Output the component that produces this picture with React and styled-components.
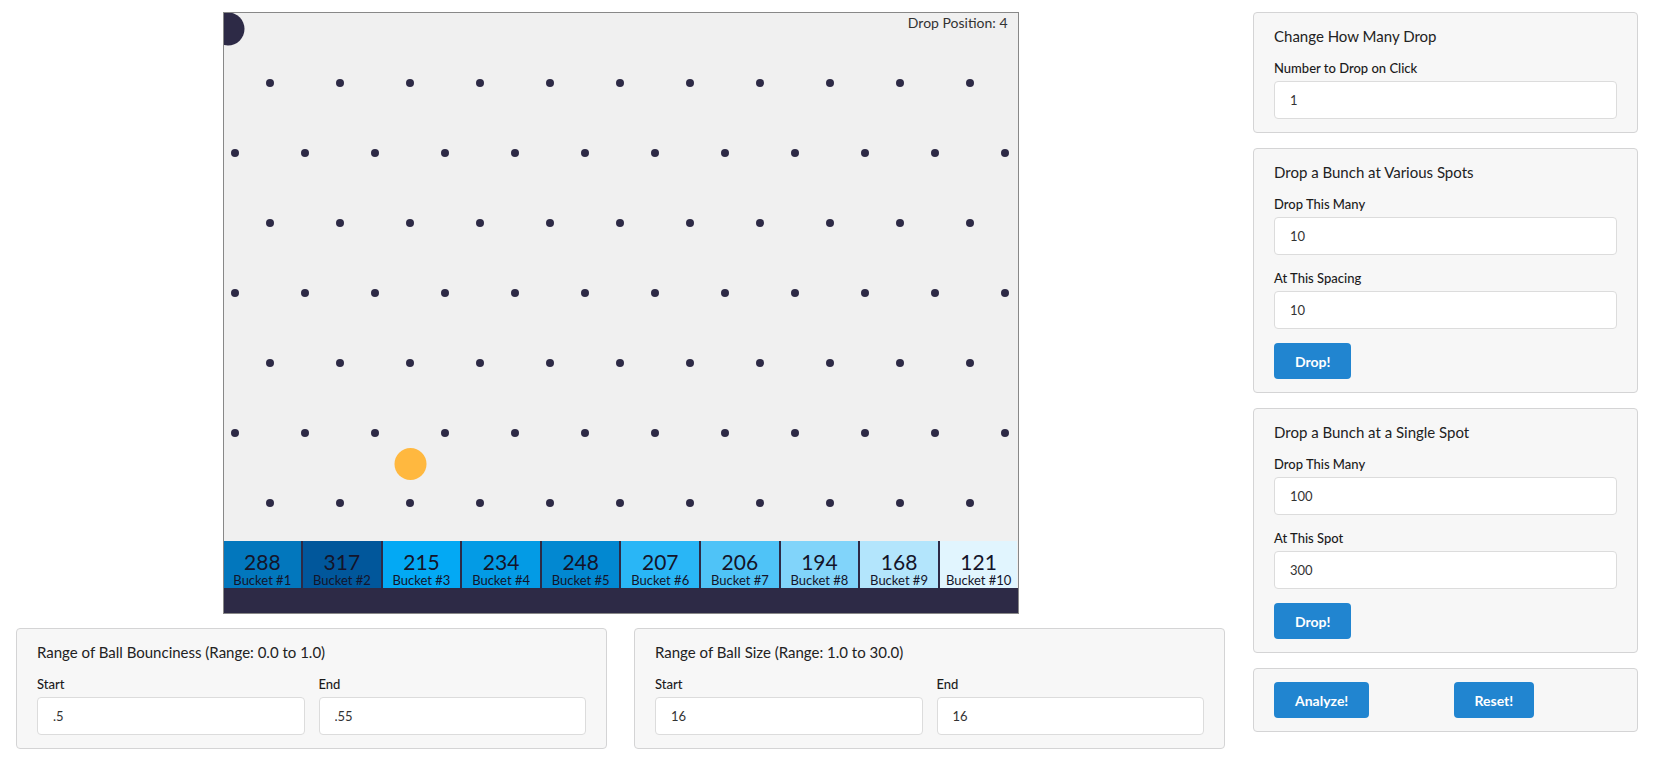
import React from "react";
import styled, { createGlobalStyle } from "styled-components";

const GlobalStyle = createGlobalStyle`
  body {
    margin: 0;
    background: #fff;
    font-family: Lato, "Open Sans", "Liberation Sans", sans-serif;
    color: #222;
  }
`;

const INK = "#2d2a46";

const Page = styled.div`
  display: flex;
  align-items: flex-start;
  gap: 28px;
  padding: 12px 0 0 16px;
`;

const LeftCol = styled.div`
  width: 1209px;
  display: flex;
  flex-direction: column;
  align-items: center;
  gap: 14px;
`;

const RightCol = styled.div`
  width: 385px;
  display: flex;
  flex-direction: column;
  gap: 15px;
`;

const Board = styled.div`
  position: relative;
  width: 794px;
  border: 1px solid #888;
  background: #f0f0f0;
  overflow: hidden;
  display: flex;
  flex-direction: column;
`;

const DropPosition = styled.div`
  position: absolute;
  top: 1px;
  right: 10px;
  font-size: 14px;
  line-height: 17px;
  color: #333;
`;

const PegField = styled.svg`
  display: block;
  width: 794px;
  height: 528px;
`;

const BucketRow = styled.div`
  display: flex;
  height: 47px;
`;

const Bucket = styled.div`
  flex: 1;
  display: flex;
  flex-direction: column;
  align-items: center;
  justify-content: flex-end;
  background: ${(p) => p.$bg};
  border-left: ${(p) => (p.$first ? "none" : `2px solid ${INK}`)};
  color: #14142a;
`;

const Count = styled.div`
  font-size: 21px;
  line-height: 22px;
`;

const BucketName = styled.div`
  font-size: 13px;
  line-height: 15px;
  white-space: nowrap;
`;

const Floor = styled.div`
  height: 25px;
  background: ${INK};
`;

const BottomRow = styled.div`
  align-self: stretch;
  display: grid;
  grid-template-columns: 1fr 1fr;
  gap: 27px;
`;

const Panel = styled.div`
  background: #f7f7f7;
  border: 1px solid #d4d4d5;
  border-radius: 4px;
  padding: 13px 20px;
`;

const PanelTitle = styled.div`
  font-size: 15px;
  line-height: 20px;
  color: #222;
  margin-bottom: 12px;
`;

const Field = styled.div`
  display: flex;
  flex-direction: column;
  margin-top: ${(p) => (p.$stacked ? "13px" : "0")};
`;

const FieldPair = styled.div`
  display: grid;
  grid-template-columns: 1fr 1fr;
  gap: 14px;
`;

const Label = styled.label`
  font-size: 13px;
  line-height: 20px;
  font-weight: 500;
  color: #1b1b1b;
  margin-bottom: 3px;
`;

const Input = styled.input`
  box-sizing: border-box;
  width: 100%;
  height: 38px;
  border: 1px solid #dcdcdc;
  border-radius: 4px;
  background: #fff;
  padding: 0 15px;
  font-family: Lato, "Liberation Sans", sans-serif;
  font-size: 13px;
  color: #333;
  outline: none;
`;

const Button = styled.button`
  align-self: flex-start;
  height: 36px;
  margin-top: ${(p) => (p.$flush ? "0" : "14px")};
  padding: 0 21px;
  border: none;
  border-radius: 4px;
  background: #2185d0;
  color: #fff;
  font-family: Lato, "Liberation Sans", sans-serif;
  font-size: 14px;
  font-weight: 700;
  cursor: pointer;
`;

const ButtonGrid = styled.div`
  display: grid;
  grid-template-columns: 1fr 1fr;
  gap: 16px;
  justify-items: start;
`;

const buckets = [
  { count: 288, bg: "#0277bd" },
  { count: 317, bg: "#01579b" },
  { count: 215, bg: "#03a9f4" },
  { count: 234, bg: "#039be5" },
  { count: 248, bg: "#0288d1" },
  { count: 207, bg: "#29b6f6" },
  { count: 206, bg: "#4fc3f7" },
  { count: 194, bg: "#81d4fa" },
  { count: 168, bg: "#b3e5fc" },
  { count: 121, bg: "#e1f5fe" },
];

// peg rows alternate between 11 and 12 pegs, 70px apart
const pegs = [];
for (let row = 1; row <= 7; row++) {
  const wide = row % 2 === 0;
  const start = wide ? 11 : 46;
  const n = wide ? 12 : 11;
  for (let i = 0; i < n; i++) pegs.push([start + i * 70, row * 70]);
}

const Pegs = () => (
  <PegField viewBox="0 0 794 528">
    <circle cx="4" cy="16" r="16.5" fill={INK} />
    {pegs.map(([x, y]) => (
      <circle key={`${x}-${y}`} cx={x} cy={y} r="4" fill={INK} />
    ))}
    <circle cx="186.5" cy="451" r="16" fill="#ffb83f" />
  </PegField>
);

const TextField = ({ label, value, stacked }) => (
  <Field $stacked={stacked}>
    <Label>{label}</Label>
    <Input defaultValue={value} />
  </Field>
);

const App = () => {
  return (
    <>
      <GlobalStyle />
      <Page>
        <LeftCol>
          <Board>
            <DropPosition>Drop Position: 4</DropPosition>
            <Pegs />
            <BucketRow>
              {buckets.map((b, i) => (
                <Bucket key={i} $bg={b.bg} $first={i === 0}>
                  <Count>{b.count}</Count>
                  <BucketName>Bucket #{i + 1}</BucketName>
                </Bucket>
              ))}
            </BucketRow>
            <Floor />
          </Board>

          <BottomRow>
            <Panel>
              <PanelTitle>Range of Ball Bounciness (Range: 0.0 to 1.0)</PanelTitle>
              <FieldPair>
                <TextField label="Start" value=".5" />
                <TextField label="End" value=".55" />
              </FieldPair>
            </Panel>
            <Panel>
              <PanelTitle>Range of Ball Size (Range: 1.0 to 30.0)</PanelTitle>
              <FieldPair>
                <TextField label="Start" value="16" />
                <TextField label="End" value="16" />
              </FieldPair>
            </Panel>
          </BottomRow>
        </LeftCol>

        <RightCol>
          <Panel>
            <PanelTitle>Change How Many Drop</PanelTitle>
            <TextField label="Number to Drop on Click" value="1" />
          </Panel>

          <Panel>
            <PanelTitle>Drop a Bunch at Various Spots</PanelTitle>
            <TextField label="Drop This Many" value="10" />
            <TextField label="At This Spacing" value="10" stacked />
            <Button>Drop!</Button>
          </Panel>

          <Panel>
            <PanelTitle>Drop a Bunch at a Single Spot</PanelTitle>
            <TextField label="Drop This Many" value="100" />
            <TextField label="At This Spot" value="300" stacked />
            <Button>Drop!</Button>
          </Panel>

          <Panel>
            <ButtonGrid>
              <Button $flush>Analyze!</Button>
              <Button $flush>Reset!</Button>
            </ButtonGrid>
          </Panel>
        </RightCol>
      </Page>
    </>
  );
};

export default App;
